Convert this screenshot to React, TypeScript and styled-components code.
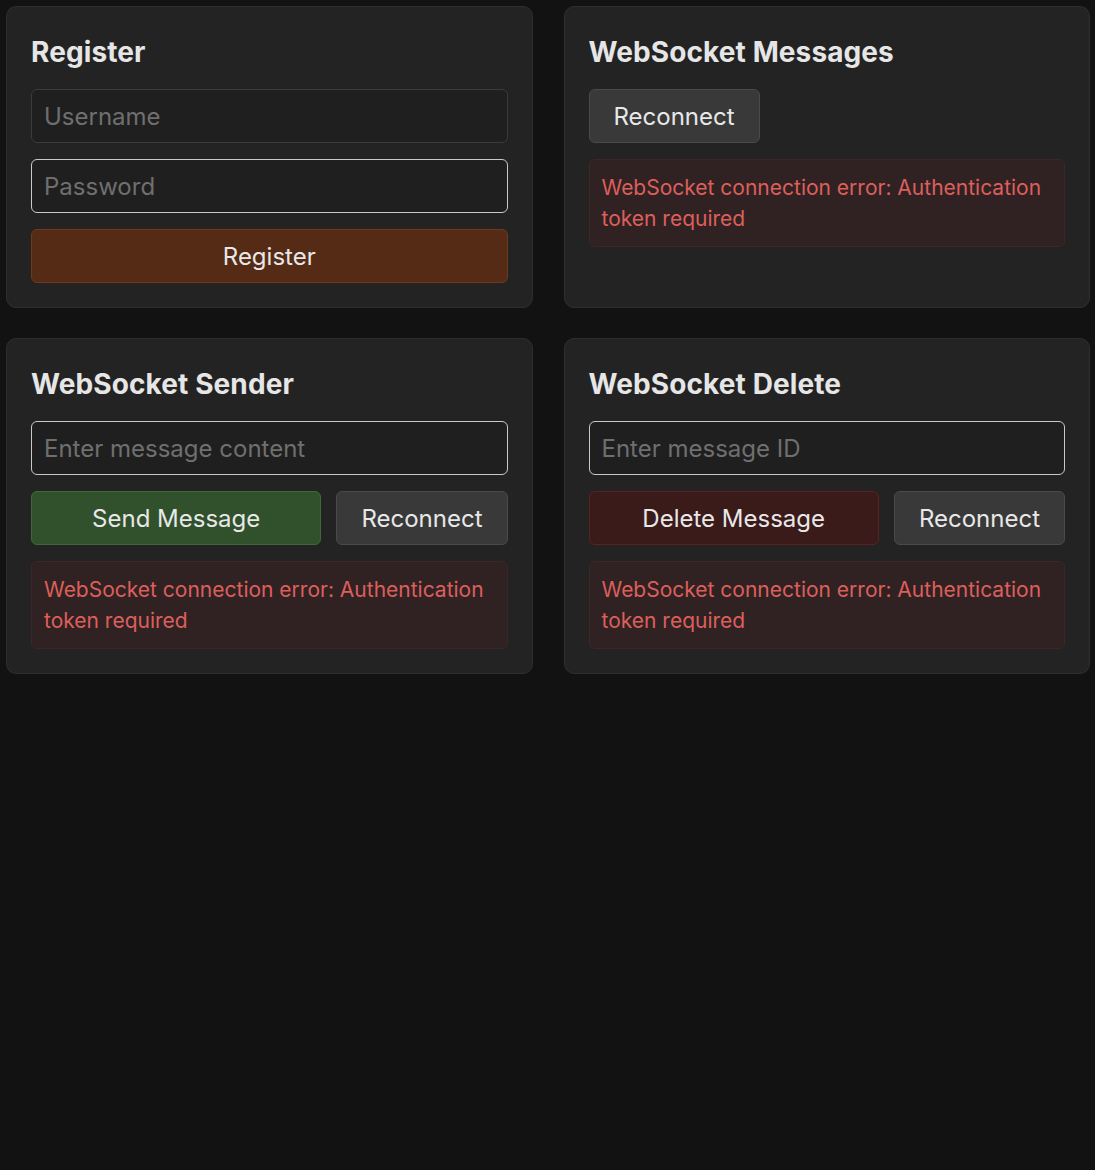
import React from "react";
import styled, { createGlobalStyle } from "styled-components";

const GlobalStyle = createGlobalStyle`
  html, body {
    margin: 0;
    padding: 0;
    background: #121212;
    font-family: Inter, "Noto Sans", sans-serif;
    color: #e6e6e6;
  }
  * {
    box-sizing: border-box;
  }
`;

const Grid = styled.div`
  display: grid;
  grid-template-columns: 1fr 1fr;
  column-gap: 31px;
  row-gap: 30px;
  padding: 6px 5px 6px 6px;
  min-height: 1170px;
  align-content: start;
`;

const Card = styled.section`
  background: #232323;
  border: 1px solid #2e2e2e;
  border-radius: 10px;
  padding: 24px;
  display: flex;
  flex-direction: column;
  gap: 16px;
`;

const Title = styled.h2`
  margin: 0;
  font-size: 28px;
  line-height: 42px;
  font-weight: 700;
  letter-spacing: 0.1px;
  color: #e6e6e6;
`;

const Input = styled.input<{ $focused?: boolean }>`
  height: 54px;
  width: 100%;
  padding: 0 12px;
  font-family: inherit;
  font-size: 24px;
  color: #e6e6e6;
  background: #1f1f1f;
  border: 1px solid ${(p) => (p.$focused ? "#3b3b3b" : "#c9c9c9")};
  border-radius: 6px;
  outline: none;

  &::placeholder {
    color: #6f6f6f;
  }
`;

const tones = {
  orange: { bg: "#552b15", border: "#70391c" },
  green: { bg: "#30512c", border: "#40693a" },
  red: { bg: "#3b1a1a", border: "#5a2323" },
  gray: { bg: "#393939", border: "#4a4a4a" },
};

const Button = styled.button<{ $tone: keyof typeof tones; $grow?: boolean }>`
  height: 54px;
  padding: 0 24px;
  flex: ${(p) => (p.$grow ? "1" : "0 0 auto")};
  font-family: inherit;
  font-size: 24px;
  color: #e8e8e8;
  background: ${(p) => tones[p.$tone].bg};
  border: 1px solid ${(p) => tones[p.$tone].border};
  border-radius: 6px;
  cursor: pointer;
`;

const ButtonRow = styled.div`
  display: flex;
  gap: 15px;
`;

const StartRow = styled.div`
  display: flex;
`;

const ErrorBox = styled.div`
  background: #302222;
  border: 1px solid #3a2727;
  border-radius: 6px;
  padding: 12px;
  font-size: 21px;
  line-height: 31px;
  color: #dd5f5c;
`;

const errorText = "WebSocket connection error: Authentication token required";

export default function App() {
  return (
    <>
      <GlobalStyle />
      <Grid>
        <Card>
          <Title>Register</Title>
          <Input placeholder="Username" $focused />
          <Input placeholder="Password" type="password" />
          <Button $tone="orange">Register</Button>
        </Card>

        <Card>
          <Title>WebSocket Messages</Title>
          <StartRow>
            <Button $tone="gray">Reconnect</Button>
          </StartRow>
          <ErrorBox>{errorText}</ErrorBox>
        </Card>

        <Card>
          <Title>WebSocket Sender</Title>
          <Input placeholder="Enter message content" />
          <ButtonRow>
            <Button $tone="green" $grow>
              Send Message
            </Button>
            <Button $tone="gray">Reconnect</Button>
          </ButtonRow>
          <ErrorBox>{errorText}</ErrorBox>
        </Card>

        <Card>
          <Title>WebSocket Delete</Title>
          <Input placeholder="Enter message ID" />
          <ButtonRow>
            <Button $tone="red" $grow>
              Delete Message
            </Button>
            <Button $tone="gray">Reconnect</Button>
          </ButtonRow>
          <ErrorBox>{errorText}</ErrorBox>
        </Card>
      </Grid>
    </>
  );
}
